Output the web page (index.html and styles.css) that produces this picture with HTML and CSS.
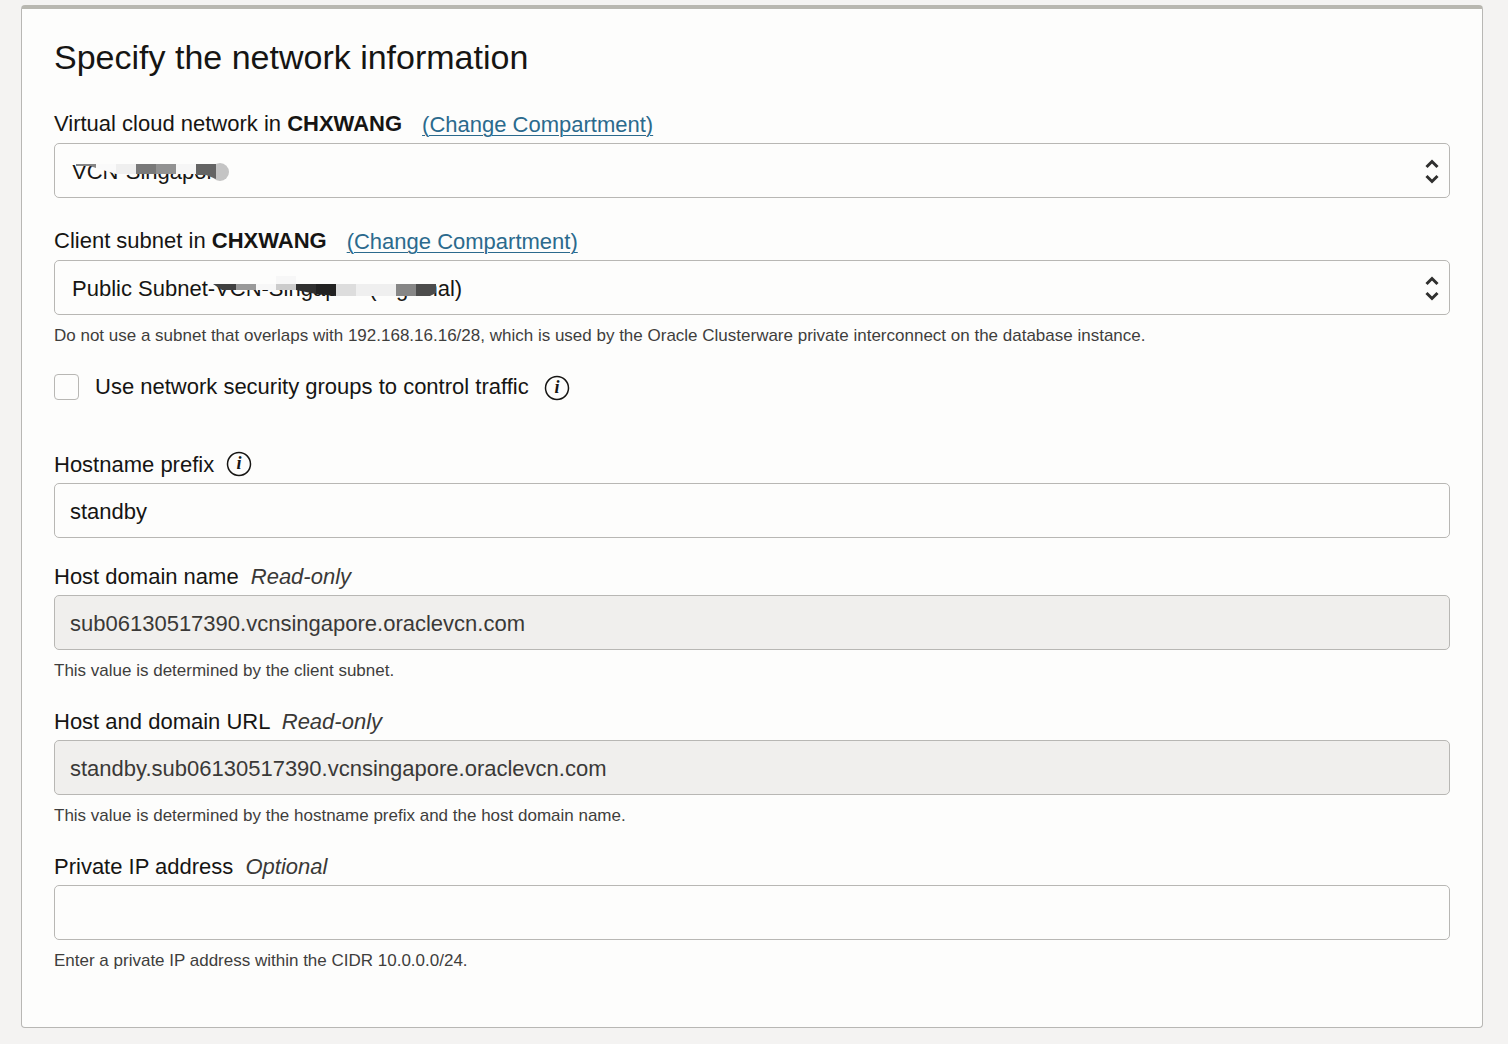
FILE: index.html
```html
<!DOCTYPE html>
<html lang="en">
<head>
<meta charset="utf-8">
<title>Specify the network information</title>
<link rel="stylesheet" href="styles.css">
</head>
<body>
<main class="card">
  <h1 class="title">Specify the network information</h1>
  <form>
    <div class="field field-select">
      <div class="label-row"><label for="vcn">Virtual cloud network in <strong>CHXWANG</strong></label><a class="link" href="#">(Change Compartment)</a></div>
      <div class="select-wrap">
        <select class="control" id="vcn"><option>VCN-Singapore</option></select>
        <svg class="arrows" viewBox="0 0 16 26" aria-hidden="true"><path d="M2.5 9 8 3.5 13.5 9M2.5 18 8 23.5 13.5 18"/></svg>
        <svg class="redaction" width="240" height="40" aria-hidden="true">
          <path fill="#fdfdfc" d="M16 4H174V21H16z"/>
          <path fill="#858585" d="M22 20H42V24L36 22H22z"/>
          <path fill="#fafafa" d="M42 20H62V30L42 24z"/>
          <path fill="#efefef" d="M62 20H82V30H62z"/>
          <path fill="#797979" d="M82 20H102V30H82z"/>
          <path fill="#929292" d="M102 20H122V30H102z"/>
          <path fill="#f6f6f6" d="M122 20H142V30H122z"/>
          <circle cx="166" cy="28" r="9" fill="#c4c4c4"/>
          <path fill="#646464" d="M142 20H162V35L152 31H142z"/>
        </svg>
      </div>
    </div>
    <div class="field field-select">
      <div class="label-row"><label for="subnet">Client subnet in <strong>CHXWANG</strong></label><a class="link" href="#">(Change Compartment)</a></div>
      <div class="select-wrap">
        <select class="control" id="subnet"><option>Public Subnet-VCN-Singapore(regional)</option></select>
        <svg class="arrows" viewBox="0 0 16 26" aria-hidden="true"><path d="M2.5 9 8 3.5 13.5 9M2.5 18 8 23.5 13.5 18"/></svg>
        <svg class="redaction" width="400" height="40" aria-hidden="true">
          <path fill="#fdfdfc" d="M160 4H383V23H160z"/>
          <path fill="#404040" d="M159 23H182V29H168z"/>
          <path fill="#999" d="M182 23H202V29H182z"/>
          <path fill="#f7f7f7" d="M202 23H222V29H202z"/>
          <path fill="#f7f7f7" d="M222 15H242V23H222z"/>
          <path fill="#ccc" d="M222 23H242V29H222z"/>
          <path fill="#303030" d="M242 23H262V33L242 29z"/>
          <path fill="#222" d="M262 23H282V35L262 33z"/>
          <path fill="#ddd" d="M282 23H302V35H282z"/>
          <path fill="#efefef" d="M302 23H342V35H302z"/>
          <path fill="#868686" d="M342 23H362V35H342z"/>
          <path fill="#4c4c4c" d="M362 23H382V32L376 35H362z"/>
        </svg>
      </div>
      <p class="help">Do not use a subnet that overlaps with 192.168.16.16/28, which is used by the Oracle Clusterware private interconnect on the database instance.</p>
    </div>
    <div class="check-row">
      <input class="checkbox" type="checkbox" id="nsg">
      <label for="nsg">Use network security groups to control traffic</label>
      <svg class="info" viewBox="0 0 26 26" role="img" aria-label="Information"><circle cx="13" cy="13" r="11.5"/><text x="13" y="18" text-anchor="middle">i</text></svg>
    </div>
    <div class="field">
      <div class="label-row"><label for="prefix">Hostname prefix</label>
      <svg class="info" viewBox="0 0 26 26" role="img" aria-label="Information"><circle cx="13" cy="13" r="11.5"/><text x="13" y="18" text-anchor="middle">i</text></svg></div>
      <input class="control" type="text" id="prefix" value="standby">
    </div>
    <div class="field field-spaced">
      <div class="label-row"><label for="domain">Host domain name <em>Read-only</em></label></div>
      <input class="control" type="text" id="domain" value="sub06130517390.vcnsingapore.oraclevcn.com" readonly>
      <p class="help">This value is determined by the client subnet.</p>
    </div>
    <div class="field">
      <div class="label-row"><label for="url">Host and domain URL <em>Read-only</em></label></div>
      <input class="control" type="text" id="url" value="standby.sub06130517390.vcnsingapore.oraclevcn.com" readonly>
      <p class="help">This value is determined by the hostname prefix and the host domain name.</p>
    </div>
    <div class="field">
      <div class="label-row"><label for="ip">Private IP address <em>Optional</em></label></div>
      <input class="control" type="text" id="ip">
      <p class="help">Enter a private IP address within the CIDR 10.0.0.0/24.</p>
    </div>
  </form>
</main>
</body>
</html>
```

FILE: styles.css
```css
* { box-sizing: border-box; }
body {
  margin: 0;
  padding: 5px 25px 16px 21px;
  background: #f4f3f2;
  color: #161513;
  font: 22px/28px "Liberation Sans", Arial, sans-serif;
}
.card {
  padding: 28px 32px 29px;
  background: #fdfdfc;
  border: 1px solid #b8b7b4;
  border-top: 4px solid #b8b7b0;
  border-radius: 4px;
}
.title {
  margin: 0 0 34px;
  font-size: 34px;
  line-height: 40px;
  font-weight: 400;
}
.field { margin-bottom: 16px; }
.field-select { margin-bottom: 30px; }
.field-select:has(.help) { margin-bottom: 17px; }
.field-spaced { margin-top: 25px; }
.label-row {
  display: flex;
  align-items: flex-start;
  height: 32px;
}
.field-select label { line-height: 26px; }
.label-row em { margin-left: 6px; color: #3a3937; }
.link {
  margin-left: 20px;
  color: #2b6a8d;
  text-decoration-thickness: 1px;
  text-underline-offset: 3px;
}
.control {
  display: block;
  width: 100%;
  height: 55px;
  padding: 2px 15px 0;
  border: 1px solid #b8b7b4;
  border-radius: 5px;
  background: #fdfdfc;
  color: #161513;
  font: inherit;
  appearance: none;
}
.control:read-only:not(select) { background: #f0efed; color: #3a3937; }
select.control { padding: 2px 17px 0; }
.select-wrap { position: relative; }
.arrows {
  position: absolute;
  top: 15px;
  right: 10px;
  width: 16px;
  height: 26px;
  fill: none;
  stroke: #30302f;
  stroke-width: 3;
  pointer-events: none;
}
.redaction {
  position: absolute;
  top: 1px;
  left: 0;
  pointer-events: none;
}
.help {
  margin: 0;
  color: #3f3e3c;
  font-size: 17px;
  line-height: 42px;
}
.check-row {
  display: flex;
  align-items: center;
  height: 26px;
  margin-bottom: 51px;
}
.checkbox {
  width: 25px;
  height: 26px;
  margin: 0 16px 0 0;
  border: 1px solid #b8b7b4;
  border-radius: 4px;
  background: #fdfdfc;
  appearance: none;
}
.info {
  width: 26px;
  height: 26px;
  margin-left: 12px;
  fill: none;
  stroke: #161513;
  stroke-width: 1.5;
}
.check-row .info { margin: 2px 0 0 15px; }
.info text {
  fill: #161513;
  stroke: none;
  font: italic bold 18px "Liberation Serif", serif;
}
```
